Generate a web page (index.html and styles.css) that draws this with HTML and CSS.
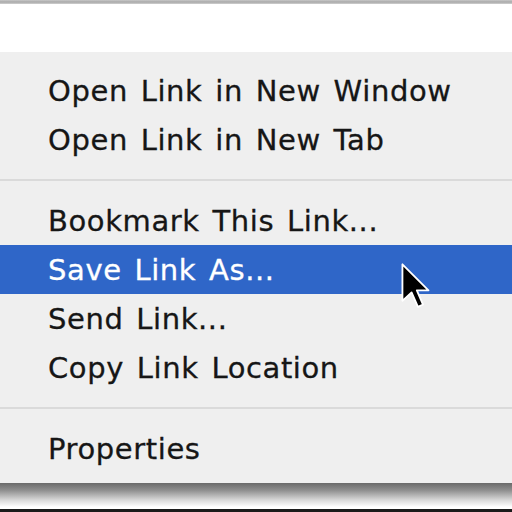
FILE: index.html
```html
<!DOCTYPE html>
<html>
<head>
<meta charset="utf-8">
<link rel="stylesheet" href="styles.css">
</head>
<body>
<div class="frame">
  <div class="topline"></div>
  <div class="page"></div>
  <div class="menu">
    <div class="item">Open Link in New Window</div>
    <div class="item">Open Link in New Tab</div>
    <div class="sep"></div>
    <div class="item">Bookmark This Link...</div>
    <div class="item active">Save Link As...
      <svg class="cursor" width="30" height="48" viewBox="-1 -1 13 21">
        <path d="M0,0 L0,16 L4,12.3 L6.8,18.6 L9,17.6 L6.3,11.4 L11.4,11.4 Z" fill="#000" stroke="#fff" stroke-width="0.8" stroke-linejoin="round"/>
      </svg>
    </div>
    <div class="item">Send Link...</div>
    <div class="item">Copy Link Location</div>
    <div class="sep"></div>
    <div class="item">Properties</div>
  </div>
  <div class="shadow"></div>
  <div class="bottomline"></div>
</div>
</body>
</html>
```
FILE: styles.css
```css
html, body {
  margin: 0;
  padding: 0;
  background: #ffffff;
}
.frame {
  width: 512px;
  height: 512px;
  display: flex;
  flex-direction: column;
  overflow: hidden;
  font-family: "DejaVu Sans", "Liberation Sans", sans-serif;
}
.topline {
  height: 4px;
  background: linear-gradient(#c8c8c8, #a9a9a9 50%, #d0d0d0);
  flex: none;
}
.page {
  height: 48px;
  background: #ffffff;
  flex: none;
}
.menu {
  background: #efefef;
  padding: 14px 0 10px;
  flex: none;
}
.item {
  height: 49px;
  line-height: 50px;
  padding-left: 48px;
  font-size: 29px;
  letter-spacing: 0.6px;
  word-spacing: 3px;
  color: #161616;
  -webkit-text-stroke: 0.3px currentColor;
  position: relative;
  white-space: nowrap;
}
.item.active {
  background: #2f66c8;
  color: #ffffff;
}
.sep {
  height: 32px;
  display: flex;
  align-items: center;
}
.sep::before {
  content: "";
  display: block;
  width: 100%;
  height: 2px;
  background: #dadada;
}
.cursor {
  position: absolute;
  left: 400px;
  top: 17px;
}
.shadow {
  height: 24px;
  background: linear-gradient(#6a6a6a, #8e8e8e 30%, #d6d6d6 70%, #ffffff);
  flex: none;
}
.bottomline {
  flex: 1;
  border-top: 2px solid #ffffff;
  background: #1a1a1a;
}
```
